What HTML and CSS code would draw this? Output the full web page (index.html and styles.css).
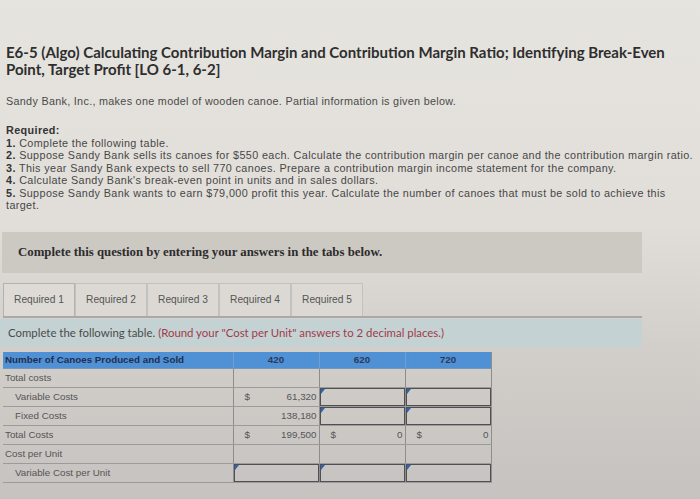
FILE: index.html
```html
<!DOCTYPE html>
<html>
<head>
<meta charset="utf-8">
<link rel="stylesheet" href="styles.css">
</head>
<body>
<div class="page">
  <h1 class="title">E6-5 (Algo) Calculating Contribution Margin and Contribution Margin Ratio; Identifying Break-Even Point, Target Profit [LO 6-1, 6-2]</h1>
  <p class="intro">Sandy Bank, Inc., makes one model of wooden canoe. Partial information is given below.</p>
  <div class="required">
    <div class="req-head">Required:</div>
    <div><b>1.</b> Complete the following table.</div>
    <div><b>2.</b> Suppose Sandy Bank sells its canoes for $550 each. Calculate the contribution margin per canoe and the contribution margin ratio.</div>
    <div><b>3.</b> This year Sandy Bank expects to sell 770 canoes. Prepare a contribution margin income statement for the company.</div>
    <div><b>4.</b> Calculate Sandy Bank's break-even point in units and in sales dollars.</div>
    <div><b>5.</b> Suppose Sandy Bank wants to earn $79,000 profit this year. Calculate the number of canoes that must be sold to achieve this</div>
    <div>target.</div>
  </div>
</div>
<div class="notice">Complete this question by entering your answers in the tabs below.</div>
<div class="tabs">
  <div class="tab active">Required 1</div>
  <div class="tab">Required 2</div>
  <div class="tab">Required 3</div>
  <div class="tab">Required 4</div>
  <div class="tab">Required 5</div>
</div>
<div class="instructions">Complete the following table. <span class="round">(Round your "Cost per Unit" answers to 2 decimal places.)</span></div>
<table class="grid">
  <colgroup><col class="c1"><col class="cn"><col class="cn"><col class="cn"></colgroup>
  <tr class="head"><th class="lbl">Number of Canoes Produced and Sold</th><th>420</th><th>620</th><th>720</th></tr>
  <tr><td class="lbl">Total costs</td><td></td><td></td><td></td></tr>
  <tr><td class="lbl ind">Variable Costs</td><td><div class="val"><span>$</span><span>61,320</span></div></td><td class="in"><div class="box"></div></td><td class="in"><div class="box"></div></td></tr>
  <tr><td class="lbl ind">Fixed Costs</td><td><div class="val"><span></span><span>138,180</span></div></td><td class="in"><div class="box"></div></td><td class="in"><div class="box"></div></td></tr>
  <tr><td class="lbl">Total Costs</td><td><div class="val"><span>$</span><span>199,500</span></div></td><td><div class="val"><span>$</span><span>0</span></div></td><td><div class="val"><span>$</span><span>0</span></div></td></tr>
  <tr><td class="lbl">Cost per Unit</td><td></td><td></td><td></td></tr>
  <tr><td class="lbl ind">Variable Cost per Unit</td><td class="in"><div class="box"></div></td><td class="in"><div class="box"></div></td><td class="in"><div class="box"></div></td></tr>
</table>
</body>
</html>
```

FILE: styles.css
```css
html, body {
  margin: 0;
  padding: 0;
}
body {
  width: 700px;
  height: 499px;
  overflow: hidden;
  background: linear-gradient(to bottom, #e6e4df 0%, #e1ded9 45%, #d2cfcb 70%, #c6c2bf 100%);
  font-family: Lato, "Open Sans", sans-serif;
  color: #3e3e3e;
}
.page {
  padding: 44px 4px 0 6px;
}
.title {
  margin: 0;
  font-size: 15px;
  line-height: 17px;
  font-weight: 700;
  color: #2e2e2e;
}
.intro {
  margin: 17px 0 0 0;
  font-family: "Liberation Sans", Arial, sans-serif;
  font-size: 10.8px;
  line-height: 13px;
  letter-spacing: 0.3px;
  color: #4a4a4a;
}
.required {
  margin-top: 16px;
  font-family: "Liberation Sans", Arial, sans-serif;
  font-size: 10.8px;
  line-height: 12.5px;
  letter-spacing: 0.38px;
  color: #474747;
}
.required b { font-weight: 700; color: #333; }
.req-head { font-weight: 700; color: #333; }
.notice {
  margin: 20px 0 0 2px;
  width: 624px;
  height: 41px;
  padding-left: 16px;
  display: flex;
  align-items: center;
  background: #ccc8c2;
  font-family: "Liberation Serif", serif;
  font-weight: 700;
  font-size: 12.8px;
  color: #2c2c2c;
}
.tabs {
  display: flex;
  margin: 10px 0 0 3px;
  width: 639px;
  border-bottom: 2px solid #a9aaa8;
  height: 33px;
}
.tab {
  width: 70px;
  border: 1px solid #c4c1bc;
  border-bottom: none;
  display: flex;
  align-items: center;
  justify-content: center;
  font-family: "Liberation Sans", sans-serif;
  font-size: 10.2px;
  color: #555;
  background: #dcd9d4;
}
.tab.active {
  background: #dedbd6;
  border-color: #b5b2ad;
}
.instructions {
  margin-top: 1px;
  width: 634px;
  height: 28px;
  padding-left: 8px;
  display: flex;
  align-items: center;
  background: #c5d2d3;
  font-size: 11.4px;
  color: #4b4b4b;
}
.instructions .round {
  color: #a23a4b;
  margin-left: 3px;
}
.grid {
  margin: 5px 0 0 3px;
  border-collapse: collapse;
  font-family: "Liberation Sans", sans-serif;
  font-size: 9.8px;
  color: #555;
}
.c1 { width: 230px; }
.cn { width: 86px; }
.grid td, .grid th {
  height: 18px;
  padding: 0;
  border-bottom: 1px solid #9d9b98;
  border-left: 1px solid #8f8d8b;
}
.grid tr > :first-child { border-left: none; }
.grid tr > :last-child { border-right: 1px solid #8f8d8b; }
.grid .head th {
  height: 16px;
  background: #5090d4;
  color: #2a3a5a;
  font-weight: 700;
  text-align: center;
  border-left: 1px solid #6f9fd6;
  border-bottom: 1px solid #7a96b8;
  font-size: 9.8px;
}
.grid .head th.lbl {
  text-align: left;
  padding-left: 2px;
  border-left: none;
  color: #1f2f4f;
}
.grid td.lbl {
  padding-left: 2px;
}
.grid td.ind {
  padding-left: 12px;
}
.val {
  display: flex;
  justify-content: space-between;
  padding: 0 2px 0 11px;
}
.in { position: relative; }
.box {
  position: absolute;
  left: 0;
  top: 0;
  right: 0;
  bottom: 0;
  border: 1px solid #4f5054;
}
.box::before {
  content: "";
  position: absolute;
  left: 0;
  top: 0;
  border-top: 5px solid #2e64b8;
  border-right: 4px solid transparent;
}
```
